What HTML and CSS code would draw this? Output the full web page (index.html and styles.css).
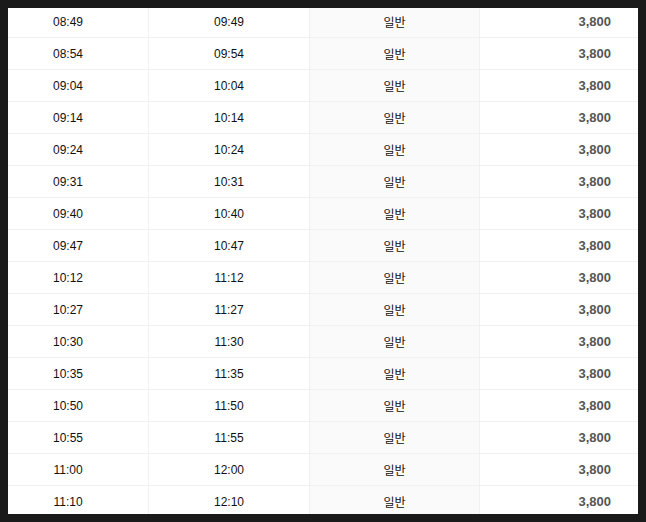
FILE: index.html
```html
<!DOCTYPE html>
<html lang="ko">
<head>
<meta charset="utf-8">
<title>시간표</title>
<link rel="stylesheet" href="styles.css">
</head>
<body>
<div class="viewport">
  <div class="table">
    <div class="row"><div class="c c1">08:49</div><div class="c c2">09:49</div><div class="c c3">일반</div><div class="c c4">3,800</div></div>
    <div class="row"><div class="c c1">08:54</div><div class="c c2">09:54</div><div class="c c3">일반</div><div class="c c4">3,800</div></div>
    <div class="row"><div class="c c1">09:04</div><div class="c c2">10:04</div><div class="c c3">일반</div><div class="c c4">3,800</div></div>
    <div class="row"><div class="c c1">09:14</div><div class="c c2">10:14</div><div class="c c3">일반</div><div class="c c4">3,800</div></div>
    <div class="row"><div class="c c1">09:24</div><div class="c c2">10:24</div><div class="c c3">일반</div><div class="c c4">3,800</div></div>
    <div class="row"><div class="c c1">09:31</div><div class="c c2">10:31</div><div class="c c3">일반</div><div class="c c4">3,800</div></div>
    <div class="row"><div class="c c1">09:40</div><div class="c c2">10:40</div><div class="c c3">일반</div><div class="c c4">3,800</div></div>
    <div class="row"><div class="c c1">09:47</div><div class="c c2">10:47</div><div class="c c3">일반</div><div class="c c4">3,800</div></div>
    <div class="row"><div class="c c1">10:12</div><div class="c c2">11:12</div><div class="c c3">일반</div><div class="c c4">3,800</div></div>
    <div class="row"><div class="c c1">10:27</div><div class="c c2">11:27</div><div class="c c3">일반</div><div class="c c4">3,800</div></div>
    <div class="row"><div class="c c1">10:30</div><div class="c c2">11:30</div><div class="c c3">일반</div><div class="c c4">3,800</div></div>
    <div class="row"><div class="c c1">10:35</div><div class="c c2">11:35</div><div class="c c3">일반</div><div class="c c4">3,800</div></div>
    <div class="row"><div class="c c1">10:50</div><div class="c c2">11:50</div><div class="c c3">일반</div><div class="c c4">3,800</div></div>
    <div class="row"><div class="c c1">10:55</div><div class="c c2">11:55</div><div class="c c3">일반</div><div class="c c4">3,800</div></div>
    <div class="row"><div class="c c1">11:00</div><div class="c c2">12:00</div><div class="c c3">일반</div><div class="c c4">3,800</div></div>
    <div class="row"><div class="c c1">11:10</div><div class="c c2">12:10</div><div class="c c3">일반</div><div class="c c4">3,800</div></div>
  </div>
</div>
</body>
</html>
```

FILE: styles.css
```css
html, body {
  margin: 0;
  padding: 0;
  background: #1a1a1a;
}
body {
  padding: 8px;
  font-family: "Liberation Sans", "Noto Sans CJK KR", sans-serif;
  font-size: 12px;
  color: #111;
}
.viewport {
  width: 630px;
  height: 506px;
  overflow: hidden;
  background: #fff;
}
.table {
  margin-top: -2px;
}
.row {
  display: grid;
  grid-template-columns: 141px 161px 170px 158px;
  height: 32px;
  box-sizing: border-box;
  border-bottom: 1px solid #f1f1f1;
}
.c {
  display: flex;
  align-items: center;
  box-sizing: border-box;
  height: 31px;
}
.c1, .c2, .c3 {
  border-right: 1px solid #f1f1f1;
}
.c1 {
  justify-content: center;
  padding-right: 20px;
}
.c2 {
  justify-content: center;
}
.c3 {
  justify-content: center;
  background: #fafafa;
  font-family: "Noto Sans CJK KR", sans-serif;
  font-size: 12px;
}
.c4 {
  justify-content: flex-end;
  padding-right: 27px;
  font-weight: bold;
  font-size: 13px;
  color: #555;
}
```
